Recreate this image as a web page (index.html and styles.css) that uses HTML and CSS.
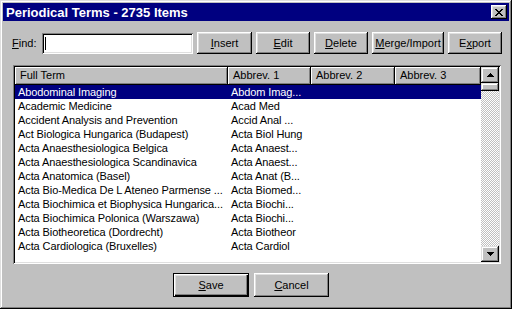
FILE: index.html
```html
<!DOCTYPE html>
<html lang="en">
<head>
    <meta charset="UTF-8">
    <title>Periodical Terms</title>
    <link rel="stylesheet" href="styles.css">
</head>
<body>
    <div class="window">
        <div class="titlebar">
            <span class="title">Periodical Terms - 2735 Items</span>
            <button class="close">
                <svg width="8" height="7" viewBox="0 0 8 7" shape-rendering="crispEdges"><path d="M0 0h2v1h-2z M6 0h2v1h-2z M1 1h2v1h-2z M5 1h2v1h-2z M2 2h4v1h-4z M3 3h2v1h-2z M2 4h4v1h-4z M1 5h2v1h-2z M5 5h2v1h-2z M0 6h2v1h-2z M6 6h2v1h-2z"/></svg>
            </button>
        </div>

        <div class="toolbar">
            <label class="find-label"><u>F</u>ind:</label>
            <div class="field"><span class="caret"></span></div>
            <button class="btn btn-insert"><u>I</u>nsert</button>
            <button class="btn btn-edit"><u>E</u>dit</button>
            <button class="btn btn-delete"><u>D</u>elete</button>
            <button class="btn btn-merge"><u>M</u>erge/Import</button>
            <button class="btn btn-export">E<u>x</u>port</button>
        </div>

        <div class="listview">
            <div class="list-main">
                <div class="list-head">
                    <div class="hcell c1">Full Term</div>
                    <div class="hcell c2">Abbrev. 1</div>
                    <div class="hcell c3">Abbrev. 2</div>
                    <div class="hcell c4">Abbrev. 3</div>
                </div>
                <div class="list-rows">
                    <div class="row selected"><div class="cell c1">Abodominal Imaging</div><div class="cell c2">Abdom Imag...</div><div class="cell c3"></div><div class="cell c4"></div></div>
                    <div class="row"><div class="cell c1">Academic Medicine</div><div class="cell c2">Acad Med</div><div class="cell c3"></div><div class="cell c4"></div></div>
                    <div class="row"><div class="cell c1">Accident Analysis and Prevention</div><div class="cell c2">Accid Anal ...</div><div class="cell c3"></div><div class="cell c4"></div></div>
                    <div class="row"><div class="cell c1">Act Biologica Hungarica (Budapest)</div><div class="cell c2">Acta Biol Hung</div><div class="cell c3"></div><div class="cell c4"></div></div>
                    <div class="row"><div class="cell c1">Acta Anaesthesiologica Belgica</div><div class="cell c2">Acta Anaest...</div><div class="cell c3"></div><div class="cell c4"></div></div>
                    <div class="row"><div class="cell c1">Acta Anaesthesiologica Scandinavica</div><div class="cell c2">Acta Anaest...</div><div class="cell c3"></div><div class="cell c4"></div></div>
                    <div class="row"><div class="cell c1">Acta Anatomica (Basel)</div><div class="cell c2">Acta Anat (B...</div><div class="cell c3"></div><div class="cell c4"></div></div>
                    <div class="row"><div class="cell c1">Acta Bio-Medica De L Ateneo Parmense ...</div><div class="cell c2">Acta Biomed...</div><div class="cell c3"></div><div class="cell c4"></div></div>
                    <div class="row"><div class="cell c1">Acta Biochimica et Biophysica Hungarica...</div><div class="cell c2">Acta Biochi...</div><div class="cell c3"></div><div class="cell c4"></div></div>
                    <div class="row"><div class="cell c1">Acta Biochimica Polonica (Warszawa)</div><div class="cell c2">Acta Biochi...</div><div class="cell c3"></div><div class="cell c4"></div></div>
                    <div class="row"><div class="cell c1">Acta Biotheoretica (Dordrecht)</div><div class="cell c2">Acta Biotheor</div><div class="cell c3"></div><div class="cell c4"></div></div>
                    <div class="row"><div class="cell c1">Acta Cardiologica (Bruxelles)</div><div class="cell c2">Acta Cardiol</div><div class="cell c3"></div><div class="cell c4"></div></div>
                </div>
            </div>
            <div class="scrollbar">
                <div class="sb-btn">
                    <svg width="7" height="4" viewBox="0 0 7 4" shape-rendering="crispEdges"><path d="M3 0h1v1h1v1h1v1h1v1H0V3h1V2h1V1h1z"/></svg>
                </div>
                <div class="sb-thumb"></div>
                <div class="sb-track"></div>
                <div class="sb-btn">
                    <svg width="7" height="4" viewBox="0 0 7 4" shape-rendering="crispEdges"><path d="M0 0h7v1H6v1H5v1H4v1H3V3H2V2H1V1H0z"/></svg>
                </div>
            </div>
        </div>

        <div class="actions">
            <button class="btn btn-save default"><u>S</u>ave</button>
            <button class="btn btn-cancel"><u>C</u>ancel</button>
        </div>
    </div>
</body>
</html>
```

FILE: styles.css
```css
body {
    margin: 0;
    font-family: "Liberation Sans", Arial, sans-serif;
    font-size: 11px;
    background-color: #c0c0c0;
    color: black;
}

.window {
    width: 512px;
    height: 309px;
    box-sizing: border-box;
    padding: 3px;
    background-color: #c0c0c0;
    box-shadow: inset -1px -1px #000, inset 1px 1px #dfdfdf, inset -2px -2px #808080, inset 2px 2px #fff;
    display: flex;
    flex-direction: column;
}

.titlebar {
    height: 18px;
    background-color: #000080;
    color: white;
    display: flex;
    align-items: center;
    justify-content: space-between;
    padding: 0 2px 0 3px;
}

.title {
    font-weight: bold;
    font-size: 13px;
}

.close {
    width: 16px;
    height: 14px;
    padding: 0;
    border: none;
    background-color: #c0c0c0;
    box-shadow: inset -1px -1px #000, inset 1px 1px #fff, inset -2px -2px #808080, inset 2px 2px #dfdfdf;
    display: flex;
    align-items: center;
    justify-content: center;
}

/* shared push button look */
.btn {
    height: 22px;
    padding: 0;
    border: none;
    font-family: inherit;
    font-size: 11px;
    color: black;
    background-color: #c0c0c0;
    box-shadow: inset -1px -1px #000, inset 1px 1px #fff, inset -2px -2px #808080, inset 2px 2px #dfdfdf;
}

.btn.default {
    box-shadow: inset 0 0 0 1px #000, inset 2px 2px #fff, inset -2px -2px #000, inset -3px -3px #808080, inset 3px 3px #dfdfdf;
}

.toolbar {
    margin-top: 11px;
    height: 22px;
    padding-left: 9px;
    display: flex;
    align-items: center;
    gap: 4px;
}

.find-label {
    width: 26px;
}

.field {
    width: 151px;
    height: 21px;
    box-sizing: border-box;
    background-color: white;
    box-shadow: inset 1px 1px #808080, inset -1px -1px #fff, inset 2px 2px #000, inset -2px -2px #dfdfdf;
    display: flex;
    align-items: center;
    padding-left: 3px;
}

.caret {
    width: 1px;
    height: 13px;
    background-color: black;
}

.btn-insert { width: 55px; }
.btn-edit { width: 54px; }
.btn-delete { width: 54px; }
.btn-merge { width: 72px; }
.btn-export { width: 54px; }

.listview {
    margin: 11px 0 0 10px;
    width: 488px;
    height: 199px;
    box-sizing: border-box;
    padding: 2px;
    background-color: white;
    box-shadow: inset 1px 1px #808080, inset -1px -1px #fff, inset 2px 2px #000, inset -2px -2px #dfdfdf;
    display: flex;
}

.list-main {
    width: 466px;
    display: flex;
    flex-direction: column;
}

.list-head {
    display: flex;
    height: 18px;
}

.hcell {
    box-sizing: border-box;
    padding-left: 5px;
    line-height: 17px;
    background-color: #c0c0c0;
    box-shadow: inset -1px -1px #000, inset 1px 1px #fff, inset -2px -2px #808080;
}

.c1 { width: 213px; }
.c2 { width: 83px; }
.c3 { width: 84px; }
.c4 { width: 86px; }

.row {
    display: flex;
    height: 14px;
    line-height: 14px;
    letter-spacing: -0.1px;
}

.row.selected {
    background-color: #000080;
    color: white;
}

.cell {
    box-sizing: border-box;
    padding-left: 3px;
    white-space: nowrap;
    overflow: hidden;
}

.scrollbar {
    width: 18px;
    display: flex;
    flex-direction: column;
}

.sb-btn {
    height: 16px;
    background-color: #c0c0c0;
    box-shadow: inset -1px -1px #000, inset 1px 1px #dfdfdf, inset -2px -2px #808080, inset 2px 2px #fff;
    display: flex;
    align-items: center;
    justify-content: center;
}

.sb-thumb {
    height: 8px;
    background-color: #c0c0c0;
    box-shadow: inset -1px -1px #000, inset 1px 1px #dfdfdf, inset -2px -2px #808080, inset 2px 2px #fff;
}

.sb-track {
    flex: 1;
    background: repeating-conic-gradient(#c0c0c0 0 25%, #fff 0 50%) 0 0 / 2px 2px;
}

.actions {
    margin-top: 9px;
    padding-left: 170px;
    display: flex;
    gap: 5px;
}

.btn-save { width: 76px; height: 24px; }
.btn-cancel { width: 75px; height: 24px; }
```
